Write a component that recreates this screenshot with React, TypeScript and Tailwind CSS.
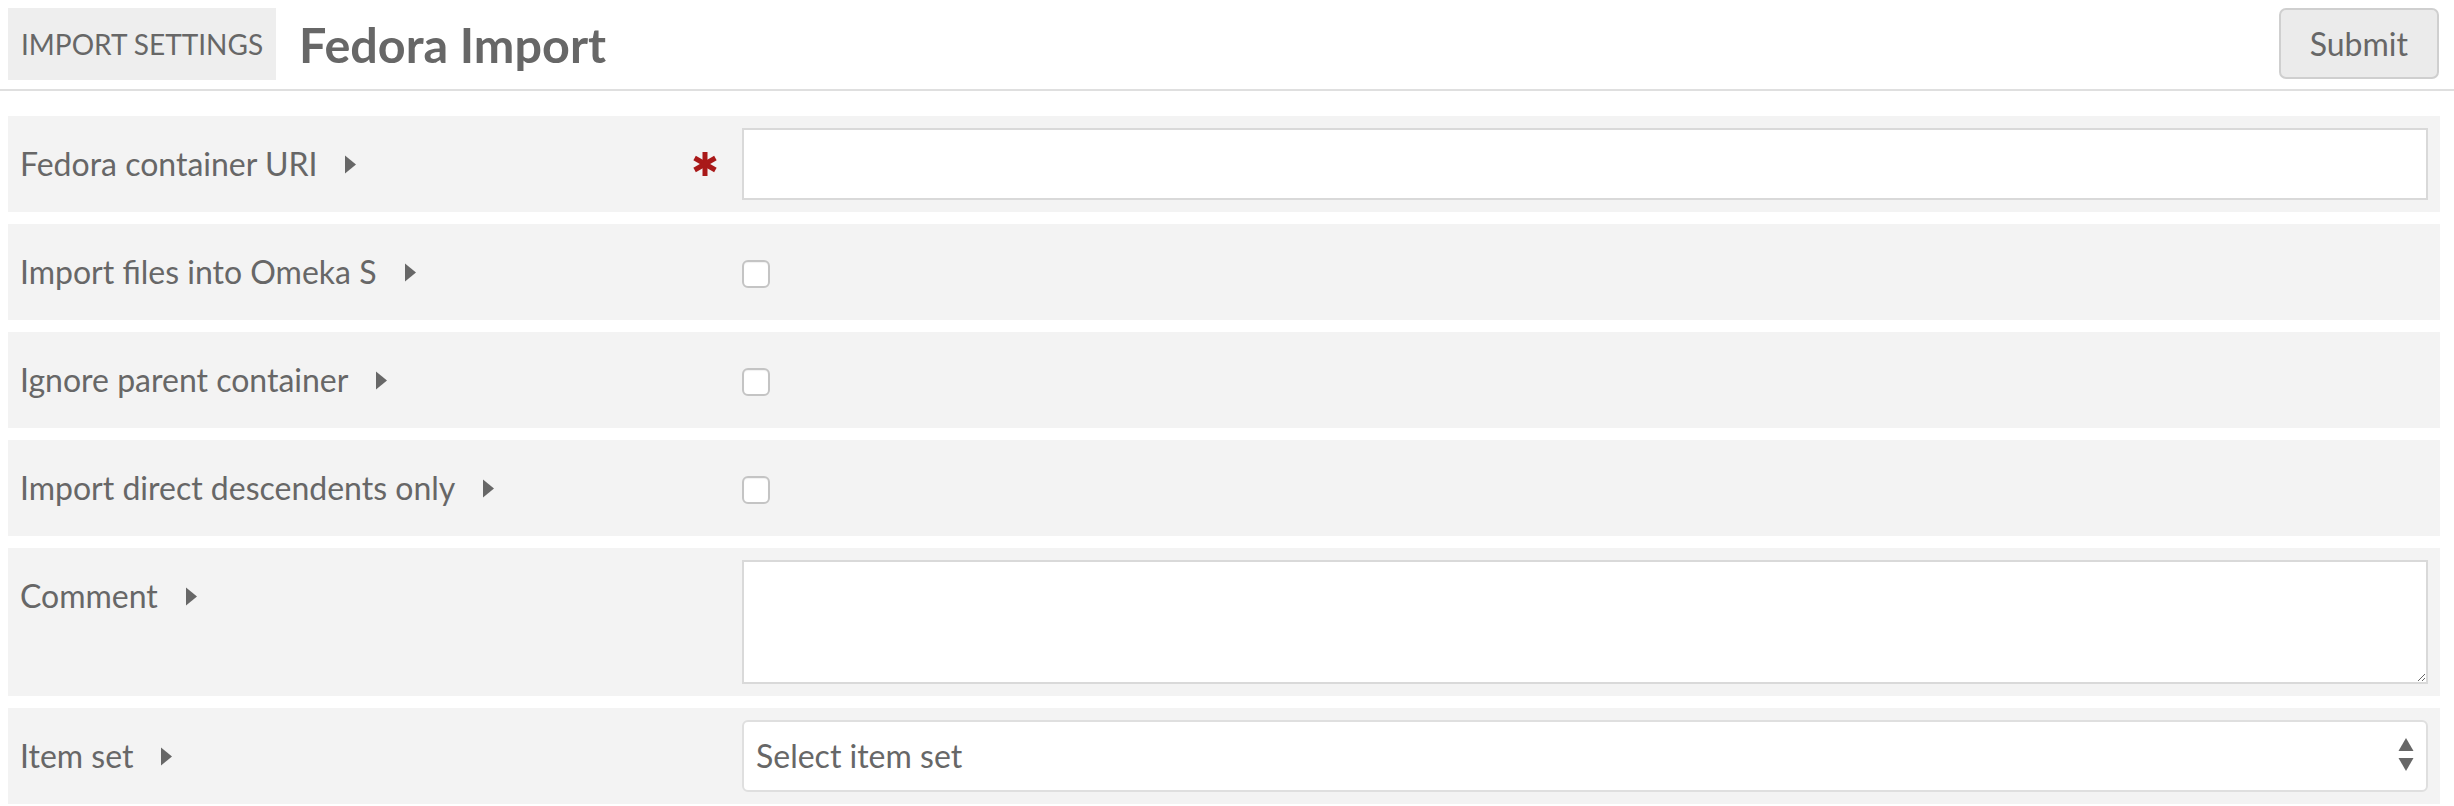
import React from "react";

function Caret() {
  return (
    <svg width="11" height="19" viewBox="0 0 11 19" className="ml-[28px] shrink-0">
      <path d="M0 0.5 L11 9.5 L0 18.5 Z" fill="#676767" />
    </svg>
  );
}

function Asterisk() {
  return (
    <svg width="24" height="26" viewBox="0 0 24 26" className="shrink-0">
      <g stroke="#a91919" strokeWidth="5" strokeLinecap="butt">
        <line x1="12" y1="1" x2="12" y2="25" />
        <line x1="1.6" y1="7" x2="22.4" y2="19" />
        <line x1="1.6" y1="19" x2="22.4" y2="7" />
      </g>
    </svg>
  );
}

function Row({
  label,
  required,
  children,
}: {
  label: string;
  required?: boolean;
  children: React.ReactNode;
}) {
  return (
    <div className="flex items-start bg-[#f3f3f3] p-[12px]">
      <div className="flex h-[72px] w-[722px] shrink-0 items-center pr-[25px]">
        <span className="leading-[72px]">{label}</span>
        <Caret />
        <div className="flex-1" />
        {required && <Asterisk />}
      </div>
      <div className="flex min-w-0 flex-1">{children}</div>
    </div>
  );
}

function Check() {
  return (
    <div className="flex h-[72px] items-center">
      <input
        type="checkbox"
        className="mt-[4px] h-[28px] w-[28px] appearance-none rounded-[6px] border-2 border-[#c4c4c4] bg-white shadow-[inset_0_1px_1px_rgba(0,0,0,0.06)]"
      />
    </div>
  );
}

export default function App() {
  return (
    <div className="min-h-[806px] w-[2454px] bg-white font-['Lato',_'Liberation_Sans',_sans-serif] text-[32px] text-[#676767]">
      <header className="flex h-[91px] items-start border-b-2 border-[#dfdfdf] pl-[8px] pr-[15px] pt-[8px]">
        <div className="flex h-[72px] items-center bg-[#eeeeee] px-[13px] text-[28px] uppercase leading-none">
          Import settings
        </div>
        <h1 className="ml-[23px] flex h-[72px] items-center text-[48.5px] font-bold leading-none">
          Fedora Import
        </h1>
        <div className="flex-1" />
        <button className="h-[71px] rounded-[7px] border-2 border-[#cfcfcf] bg-[#ebebeb] px-[29px] text-[32px] leading-none text-[#676767]">
          Submit
        </button>
      </header>

      <main className="mt-[25px] flex flex-col gap-[12px] pl-[8px] pr-[14px]">
        <Row label="Fedora container URI" required>
          <input
            type="text"
            className="h-[72px] w-full border-2 border-[#d9d9d9] bg-white px-[12px] outline-none"
          />
        </Row>
        <Row label="Import files into Omeka S">
          <Check />
        </Row>
        <Row label="Ignore parent container">
          <Check />
        </Row>
        <Row label="Import direct descendents only">
          <Check />
        </Row>
        <Row label="Comment">
          <textarea className="h-[124px] w-full resize-y border-2 border-[#d9d9d9] bg-white px-[12px] outline-none" />
        </Row>
        <Row label="Item set">
          <div className="relative w-full">
            <select className="h-[72px] w-full appearance-none rounded-[6px] border-2 border-[#dfdfdf] bg-white pl-[12px] text-[32px] text-[#676767] outline-none">
              <option>Select item set</option>
            </select>
            <svg
              width="16"
              height="34"
              viewBox="0 0 16 34"
              className="pointer-events-none absolute right-[14px] top-[18px]"
            >
              <path d="M8 0 L15.5 13 L0.5 13 Z" fill="#676767" />
              <path d="M0.5 20 L15.5 20 L8 33 Z" fill="#676767" />
            </svg>
          </div>
        </Row>
      </main>
    </div>
  );
}
